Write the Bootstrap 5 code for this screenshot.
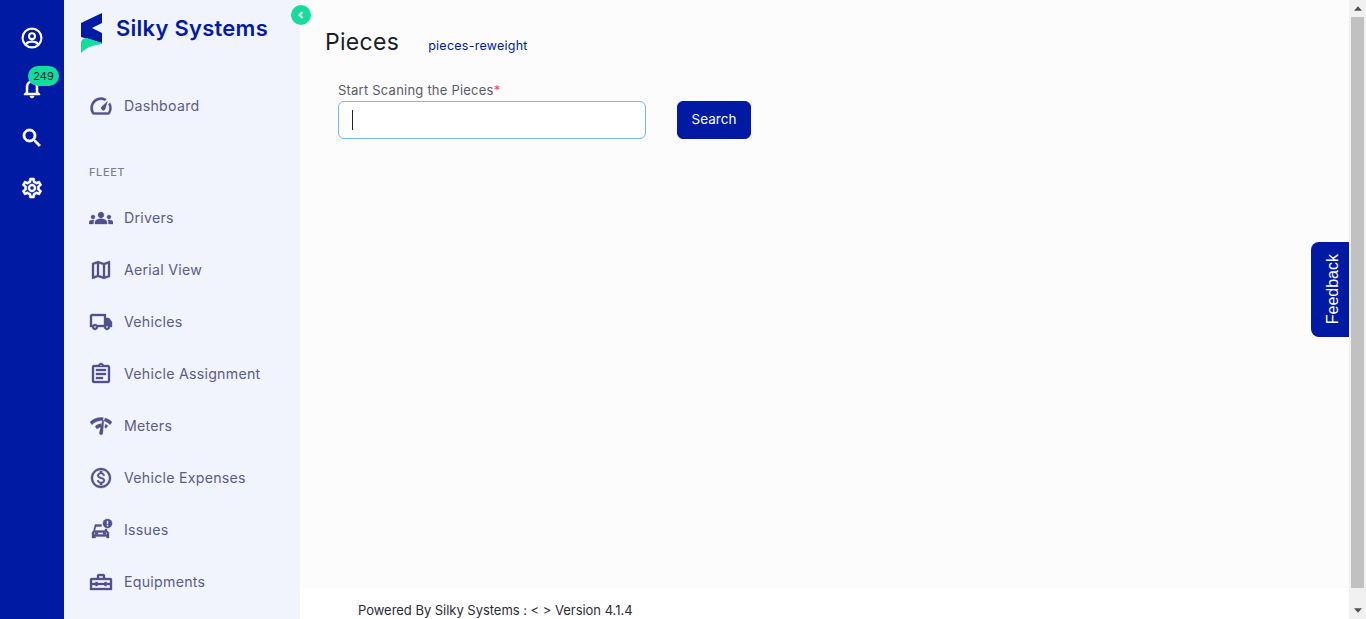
<!DOCTYPE html>
<html lang="en">
<head>
<meta charset="utf-8">
<title>Pieces</title>
<link href="https://cdn.jsdelivr.net/npm/bootstrap@5.3.0/dist/css/bootstrap.min.css" rel="stylesheet">
<style>
html,body{height:100%;overflow:hidden}
body{font-family:Inter,"Liberation Sans",sans-serif;background:#fff;color:#212529}
.shell{height:619px;position:relative}
.rail{width:64px;background:#001aa3;padding-top:13px;gap:0}
.rail-btn{width:64px;height:50px;color:#fff;position:relative}
.rail-btn svg{width:24px;height:24px;fill:#fff}
.count{position:absolute;left:28px;top:3px;width:31px;height:20px;border-radius:10px;background:#15dc9c;color:#123;font-size:11px;line-height:20px;text-align:center}
.side{width:236px;background:#f1f4fc;position:relative}
.brand{height:80px;padding:13px 0 0 17px;gap:13px;align-items:flex-start}
.brand svg{width:22px;height:40px;flex:none}
.brand-name{font-size:22px;font-weight:600;color:#001aa3;line-height:30px;letter-spacing:.25px}
.toggle{position:absolute;right:-11px;top:5px;width:20px;height:20px;border-radius:50%;background:#15dc9c}
.toggle svg{width:10px;height:10px}
.item{height:52px;padding-left:25px;gap:11px;color:#5c5d86;font-size:14.2px;letter-spacing:.25px}
.item svg{width:24px;height:24px;fill:#50508a;stroke:#50508a;stroke-width:.35;flex:none}
.sect{height:60px;padding:30px 0 0 25px;font-size:11px;font-weight:500;color:#7d7d9a;letter-spacing:.6px;line-height:20px}
.main{background:#fcfcfd;min-width:0}
.body-area{flex:1;padding:26px 0 0 25px;position:relative}
.ttl{font-size:23px;font-weight:400;margin:0;line-height:32px;color:#1c1c28;letter-spacing:.3px}
.crumb{font-size:12.5px;color:#001aa3;margin-left:29px;text-decoration:none;padding-top:11px;letter-spacing:.25px}
.form-zone{margin:22px 0 0 13px;gap:31px;align-items:flex-end}
.lbl{font-size:13px;color:#5b5b66;margin:0 0 1px;line-height:20px;letter-spacing:.22px;display:block}
.req{color:#f0466e}
.field-wrap{width:308px;position:relative}
.scan{height:38px;border:1px solid #75b6f7;border-radius:6px;background:#fff;box-shadow:none}
.scan:focus{border-color:#75b6f7;box-shadow:none}
.caret-line{position:absolute;left:14px;top:30px;width:1px;height:20px;background:#222}
.go{height:38px;width:74px;background:#001aa3;border-color:#001aa3;color:#fff;border-radius:6px;font-size:13.5px;font-weight:400;padding:0 0 2px}
.foot{height:31px;background:#fff;padding-left:58px;font-size:13px;line-height:45px;color:#2b2b33;letter-spacing:-.03px;overflow:hidden;white-space:nowrap}
.bar{width:17px;background:#f1f1f1}
.arrow{height:17px}
.arrow svg{width:8px;height:5px;fill:#505050}
.thumb{height:571px;margin:0 2px;background:#c1c1c1}
.track-gap{flex:1}
.fb{position:absolute;right:17px;top:242px;width:38px;height:95px;padding-left:6px;background:#001aa3;border-radius:8px 0 0 8px;color:#fff}
.fb span{writing-mode:vertical-rl;transform:rotate(180deg);font-family:"Liberation Sans",sans-serif;font-size:16px}
</style>
</head>
<body>
<div class="shell d-flex">
  <div class="rail d-flex flex-column flex-shrink-0">
    <div class="rail-btn d-flex align-items-center justify-content-center">
      <svg viewBox="0 0 24 24"><path d="M12 1.500a10.500 10.500 0 1 0 0 21 10.500 10.500 0 0 0 0-21zm0 2.300a8.200 8.200 0 0 1 6.600 13.100c-1.500-1.600-4-2.400-6.600-2.400s-5.100.8-6.600 2.400A8.200 8.200 0 0 1 12 3.800zm0 2.400a4 4 0 1 0 0 8 4 4 0 0 0 0-8zm0 2.100a1.900 1.900 0 1 1 0 3.800 1.900 1.900 0 0 1 0-3.800zm0 8.400c2 0 3.800.6 5 1.700a8.200 8.200 0 0 1-10 0c1.200-1.100 3-1.700 5-1.700z"/></svg>
    </div>
    <div class="rail-btn d-flex align-items-center justify-content-center">
      <svg viewBox="0 0 24 24"><path stroke="#fff" stroke-width=".5" d="M12 22c1.100 0 2-.9 2-2h-4c0 1.100.9 2 2 2zm6-6v-5c0-3.070-1.630-5.640-4.500-6.320V4c0-.83-.67-1.500-1.500-1.500s-1.500.67-1.500 1.500v.68C7.640 5.360 6 7.920 6 11v5l-2 2v1h16v-1l-2-2zm-2 1H8v-6c0-2.480 1.510-4.500 4-4.500s4 2.020 4 4.500v6z"/></svg>
      <span class="count">249</span>
    </div>
    <div class="rail-btn d-flex align-items-center justify-content-center">
      <svg viewBox="0 0 24 24"><path stroke="#fff" stroke-width=".8" d="M15.500 14h-.79l-.28-.27C15.410 12.590 16 11.110 16 9.500 16 5.910 13.090 3 9.500 3S3 5.910 3 9.500 5.910 16 9.500 16c1.610 0 3.090-.59 4.230-1.570l.27.28v.79l5 4.990L20.490 19l-4.990-5zm-6 0C7.010 14 5 11.990 5 9.500S7.010 5 9.500 5 14 7.010 14 9.500 11.990 14 9.500 14z"/></svg>
    </div>
    <div class="rail-btn d-flex align-items-center justify-content-center">
      <svg viewBox="0 0 24 24"><path stroke="#fff" stroke-width=".6" d="M19.430 12.980c.04-.32.07-.64.07-.98 0-.34-.03-.66-.07-.98l2.110-1.650c.19-.15.24-.42.12-.64l-2-3.460c-.09-.16-.26-.25-.44-.25-.06 0-.12.01-.17.03l-2.490 1c-.52-.4-1.080-.73-1.690-.98l-.38-2.650C14.460 2.180 14.250 2 14 2h-4c-.25 0-.46.18-.49.42l-.38 2.650c-.61.25-1.170.59-1.690.98l-2.490-1c-.06-.02-.12-.03-.18-.03-.17 0-.34.09-.43.25l-2 3.460c-.13.22-.07.49.12.64l2.110 1.650c-.04.32-.07.65-.07.98 0 .33.03.66.07.98l-2.110 1.650c-.19.15-.24.42-.12.64l2 3.460c.09.16.26.25.44.25.06 0 .12-.01.17-.03l2.490-1c.52.4 1.080.73 1.690.98l.38 2.650c.03.24.24.42.49.42h4c.25 0 .46-.18.49-.42l.38-2.650c.61-.25 1.170-.59 1.690-.98l2.490 1c.06.02.12.03.18.03.17 0 .34-.09.43-.25l2-3.460c.12-.22.07-.49-.12-.64l-2.110-1.650zm-1.980-1.710c.04.31.05.52.05.73 0 .21-.02.43-.05.73l-.14 1.130.89.7 1.080.84-.7 1.210-1.270-.51-1.040-.42-.9.68c-.43.32-.84.56-1.250.73l-1.060.43-.16 1.130-.2 1.350h-1.400l-.19-1.350-.16-1.130-1.060-.43c-.43-.18-.83-.41-1.230-.71l-.91-.7-1.060.43-1.270.51-.7-1.210 1.080-.84.89-.7-.14-1.130c-.03-.31-.05-.54-.05-.74s.02-.43.05-.73l.14-1.130-.89-.7-1.080-.84.7-1.210 1.270.51 1.040.42.9-.68c.43-.32.84-.56 1.250-.73l1.060-.43.16-1.130.2-1.350h1.390l.19 1.350.16 1.130 1.060.43c.43.18.83.41 1.230.71l.91.7 1.060-.43 1.270-.51.7 1.210-1.070.85-.89.7.14 1.130zM12 8c-2.210 0-4 1.790-4 4s1.790 4 4 4 4-1.790 4-4-1.790-4-4-4zm0 6c-1.100 0-2-.9-2-2s.9-2 2-2 2 .9 2 2-.9 2-2 2z"/></svg>
    </div>
  </div>

  <aside class="side flex-shrink-0">
    <div class="brand d-flex">
      <svg viewBox="0 0 22 40"><path fill="#001aa3" d="M21 0v10l-10 5 10 5v10L0 24V10z"/><path fill="#15dc9c" d="M0 40V30c0-3 3-5 6-5l15 5v1C12 32 4 35 0 40z"/></svg>
      <div class="brand-name">Silky Systems</div>
    </div>
    <div class="item d-flex align-items-center"><svg viewBox="0 0 24 24"><path d="M12 3.500C6 3.500 1.500 8.300 1.500 14c0 2 .6 4 1.600 5.600.3.5.8.9 1.400.9h15c.6 0 1.100-.4 1.400-.9 1-1.600 1.600-3.600 1.600-5.600 0-2-.6-3.800-1.500-5.300l-1.600 1.600c.7 1.100 1 2.400 1 3.700 0 1.600-.4 3.100-1.200 4.500H5C4.200 17.100 3.800 15.600 3.800 14 3.800 9.500 7.500 5.800 12 5.800c1.400 0 2.700.3 3.800 1l1.600-1.600C15.900 4.100 14 3.500 12 3.500z"/><path d="M18.500 7.200l-5.300 5.100a2.100 2.100 0 1 0 2.900 2.900z"/></svg><span>Dashboard</span></div>
    <div class="sect">FLEET</div>
    <div class="item d-flex align-items-center"><svg viewBox="0 0 24 24"><path d="M4,13c1.100,0,2-0.9,2-2c0-1.100-0.9-2-2-2s-2,0.9-2,2C2,12.100,2.900,13,4,13z M5.130,14.100C4.760,14.040,4.390,14,4,14 c-0.99,0-1.930,0.21-2.780,0.58C0.48,14.900,0,15.620,0,16.430V18l4.500,0v-1.610C4.500,15.560,4.730,14.780,5.130,14.100z M20,13c1.100,0,2-0.9,2-2 c0-1.100-0.9-2-2-2s-2,0.9-2,2C18,12.100,18.900,13,20,13z M24,16.430c0-0.81-0.48-1.530-1.220-1.850C21.930,14.210,20.990,14,20,14 c-0.39,0-0.76,0.04-1.130,0.1c0.4,0.68,0.63,1.460,0.63,2.290V18l4.500,0V16.430z M16.240,13.650c-1.170-0.52-2.610-0.9-4.240-0.9 c-1.630,0-3.070,0.39-4.240,0.9C6.680,14.130,6,15.210,6,16.390V18h12v-1.610C18,15.210,17.320,14.130,16.240,13.650z M12,12c1.660,0,3-1.340,3-3c0-1.660-1.340-3-3-3S9,7.340,9,9C9,10.660,10.340,12,12,12z"/></svg><span>Drivers</span></div>
    <div class="item d-flex align-items-center"><svg viewBox="0 0 24 24"><path d="M20.500 3l-.16.03L15 5.100 9 3 3.360 4.900c-.21.07-.36.25-.36.48V20.500c0 .28.22.5.5.5l.16-.03L9 18.900l6 2.100 5.640-1.900c.21-.07.36-.25.36-.48V3.500c0-.28-.22-.5-.5-.5zM10 5.470l4 1.400v11.660l-4-1.400V5.470zm-5 .99l3-1.010v11.700l-3 1.160V6.460zm14 11.080l-3 1.010V6.860l3-1.160v11.840z"/></svg><span>Aerial View</span></div>
    <div class="item d-flex align-items-center"><svg viewBox="0 0 24 24"><path d="M20 8h-3V4H3c-1.100 0-2 .9-2 2v11h2c0 1.660 1.340 3 3 3s3-1.340 3-3h6c0 1.660 1.340 3 3 3s3-1.340 3-3h2v-5l-3-4zM6 18c-.55 0-1-.45-1-1s.45-1 1-1 1 .45 1 1-.45 1-1 1zm2.220-3c-.55-.61-1.330-1-2.220-1s-1.670.39-2.220 1H3V6h12v9H8.220zM18 18c-.55 0-1-.45-1-1s.45-1 1-1 1 .45 1 1-.45 1-1 1z"/></svg><span>Vehicles</span></div>
    <div class="item d-flex align-items-center"><svg viewBox="0 0 24 24"><path d="M7 15h7v2H7zm0-4h10v2H7zm0-4h10v2H7zm12-4h-4.180C14.400 1.840 13.300 1 12 1c-1.300 0-2.400.84-2.820 2H5c-.14 0-.27.01-.4.04-.39.08-.74.28-1.010.55-.18.18-.33.4-.43.64-.1.23-.16.49-.16.77v14c0 .27.06.54.16.78s.25.45.43.64c.27.27.62.47 1.010.55.13.02.26.03.4.03h14c1.100 0 2-.9 2-2V5c0-1.100-.9-2-2-2zm-7-.25c.41 0 .75.34.75.75s-.34.75-.75.75-.75-.34-.75-.75.34-.75.75-.75zM19 19H5V5h14v14z"/></svg><span>Vehicle Assignment</span></div>
    <div class="item d-flex align-items-center"><svg viewBox="0 0 24 24"><path d="M12 3.500C7.800 3.500 3.900 5.200 1 8l1.900 2.700C5.300 8.300 8.500 6.800 12 6.600c.6 0 1.200 0 1.800.1l.5-3C13.600 3.600 12.800 3.500 12 3.500zm4 .5l-.9 3.100c2.300.6 4.300 1.900 6 3.600L23 8c-1.900-1.800-4.300-3.200-7-4zM12 9.800c-2.200.2-4.200 1.100-5.800 2.600l1.800 2.600c1.100-1.100 2.600-1.900 4.100-2.100zM14.800 6.500h-1.400L10.500 18.500a1.700 1.700 0 1 0 3.300.6zM16.500 10.200l-.8 3.100c.5.3 1 .6 1.400 1l1.800-2.500c-.7-.7-1.500-1.200-2.400-1.600z"/></svg><span>Meters</span></div>
    <div class="item d-flex align-items-center"><svg viewBox="0 0 24 24"><path d="M12 2C6.480 2 2 6.480 2 12s4.480 10 10 10 10-4.480 10-10S17.520 2 12 2zm0 18c-4.410 0-8-3.590-8-8s3.590-8 8-8 8 3.590 8 8-3.590 8-8 8zm.31-8.860c-1.770-.45-2.340-.94-2.340-1.670 0-.84.79-1.430 2.100-1.430 1.380 0 1.900.66 1.940 1.640h1.710c-.05-1.340-.87-2.570-2.490-2.970V5H10.900v1.690c-1.510.32-2.720 1.300-2.720 2.810 0 1.790 1.490 2.690 3.660 3.210 1.950.46 2.340 1.150 2.340 1.870 0 .53-.39 1.390-2.100 1.390-1.600 0-2.230-.72-2.320-1.640H8.040c.1 1.700 1.360 2.660 2.860 2.970V19h2.340v-1.670c1.520-.29 2.720-1.160 2.730-2.770-.01-2.200-1.900-2.960-3.660-3.420z"/></svg><span>Vehicle Expenses</span></div>
    <div class="item d-flex align-items-center"><svg viewBox="0 0 24 24"><path d="M6 6.500h6.500v2H7.200L5.800 12.500H16V11h2v1.500l2 2V20h-2.500v-1.500h-11V20H3v-5.500l1.500-2zM5 14.500v2h13v-2zM6 14.800h3v1.400H6zM14 14.800h3v1.400h-3z"/><circle cx="18.500" cy="5.500" r="4.600"/><rect x="17.800" y="2.800" width="1.400" height="3.500" fill="#f1f4fc" stroke="none"/><rect x="17.800" y="7" width="1.400" height="1.400" fill="#f1f4fc" stroke="none"/></svg><span>Issues</span></div>
    <div class="item d-flex align-items-center"><svg viewBox="0 0 24 24"><path d="M8 5.500A1.500 1.500 0 0 1 9.500 4h5A1.500 1.500 0 0 1 16 5.500V8h5.500A1.500 1.500 0 0 1 23 9.500V20H1V9.500A1.500 1.500 0 0 1 2.500 8H8zM10 6v2h4V6zM3 10v3h3.500v-1h2v1h7v-1h2v1H21v-3zM3 15v3h18v-3h-3.500v1h-2v-1h-7v1h-2v-1z"/></svg><span>Equipments</span></div>
    <div class="toggle d-flex align-items-center justify-content-center"><svg viewBox="0 0 10 10"><path d="M6.500 2L3.500 5l3 3" fill="none" stroke="#fff" stroke-width="2"/></svg></div>
  </aside>

  <main class="main flex-grow-1 d-flex flex-column">
    <div class="body-area">
      <div class="d-flex">
        <h1 class="ttl">Pieces</h1>
        <a class="crumb" href="#">pieces-reweight</a>
      </div>
      <form class="form-zone d-flex">
        <div class="field-wrap">
          <label class="lbl" for="scanbox">Start Scaning the Pieces<span class="req">*</span></label>
          <input id="scanbox" class="form-control scan" type="text">
          <span class="caret-line"></span>
        </div>
        <button type="button" class="btn go">Search</button>
      </form>
    </div>
    <footer class="foot">Powered By Silky Systems : &lt; &gt; Version 4.1.4</footer>
  </main>

  <div class="bar d-flex flex-column flex-shrink-0">
    <div class="arrow d-flex align-items-center justify-content-center"><svg viewBox="0 0 9 5"><path d="M4.500 0L9 5H0z"/></svg></div>
    <div class="thumb"></div>
    <div class="track-gap"></div>
    <div class="arrow d-flex align-items-center justify-content-center"><svg viewBox="0 0 9 5"><path d="M0 0h9L4.500 5z"/></svg></div>
  </div>

  <div class="fb d-flex align-items-center justify-content-center"><span>Feedback</span></div>
</div>
<script src="https://cdn.jsdelivr.net/npm/bootstrap@5.3.0/dist/js/bootstrap.bundle.min.js"></script>
</body>
</html>
